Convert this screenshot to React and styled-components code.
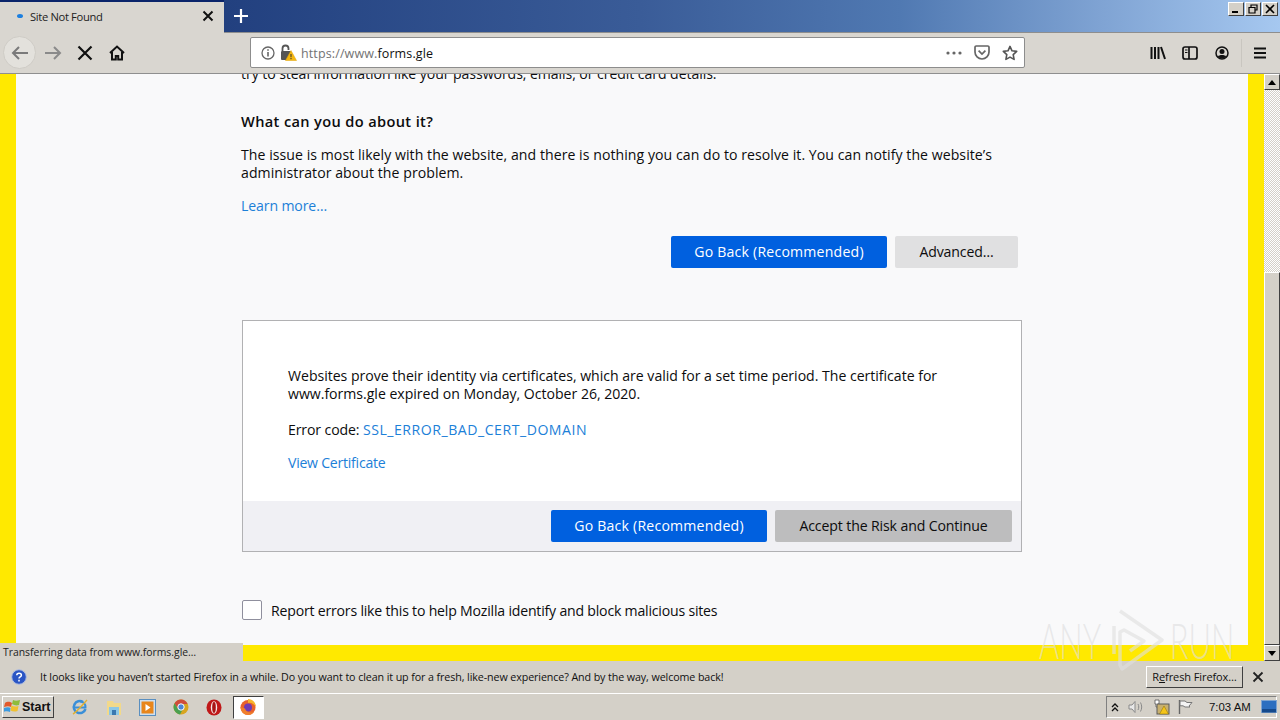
import React from "react";
import styled, { createGlobalStyle } from "styled-components";

const Global = createGlobalStyle`
  html, body { margin: 0; padding: 0; height: 100%; overflow: hidden; }
  #root { height: 720px; }
  * { box-sizing: border-box; }
`;

const uiFont = `"Open Sans", "Noto Sans", sans-serif`;
const pageFont = `"Open Sans", "Noto Sans", sans-serif`;

const Screen = styled.div`
  position: relative; width: 1280px; height: 720px; display: flex; flex-direction: column;
  background: #d4d0c8; overflow: hidden; font-family: ${uiFont}; color: #0c0c0d;
`;

/* title bar + tab */
const TitleBar = styled.div`
  height: 33px; flex: none; display: flex; align-items: stretch;
  background: linear-gradient(90deg, #102a70 0, #22407f 225px, #3a5c98 640px, #5079b2 900px, #7fa3d3 1100px, #a6c8f0 1280px);
  border-bottom: 1px solid #8e8e8e;
`;
const Tab = styled.div`
  width: 224px; height: 33px; flex: none; display: flex; align-items: center; padding: 0 10px 3px 17px;
  background: #d9d6d0; border-top: 2px solid #0a246a; font-size: 11.2px; letter-spacing: -0.34px;
`;
const TabDot = styled.span`
  width: 6px; height: 4px; border-radius: 50%; background: #1c7fe0; margin-right: 7px; flex: none;
`;
const TabTitle = styled.span` flex: 1; color: #222; `;
const NewTab = styled.div` width: 33px; display: flex; align-items: center; justify-content: center; `;
const Spacer = styled.div` flex: 1; `;
const WinButtons = styled.div` display: flex; gap: 1px; padding: 2px 2px 0 0; align-items: flex-start; `;
const WinButton = styled.div`
  width: 16px; height: 14px; background: #d4d0c8; display: flex; align-items: center; justify-content: center;
  border: 1px solid; border-color: #fff #404040 #404040 #fff;
`;

/* toolbar */
const Toolbar = styled.div`
  height: 41px; flex: none; display: flex; align-items: center; background: #d9d6d0;
  border-bottom: 1px solid #8f8f8f; padding: 0 0 1px 3px;
`;
const BackCircle = styled.div`
  width: 33px; height: 33px; border-radius: 50%; background: #e3e1dc; border: 1px solid #cfccc6;
  display: flex; align-items: center; justify-content: center; flex: none;
`;
const NavSlot = styled.div`
  width: ${p => p.$w}px; flex: none; display: flex; align-items: center; justify-content: center;
`;
const UrlBar = styled.div`
  width: 775px; height: 31px; margin-left: ${p => p.$ml}px; flex: none; display: flex; align-items: center; background: #fff;
  border: 1px solid #8d8d8d; border-radius: 2px; padding: 0 0 0 10px; font-size: 12.5px; letter-spacing: 0.12px;
`;
const UrlGrey = styled.span` color: #737373; margin-left: 4px; padding-top: 1px; `;
const UrlDark = styled.span` color: #111; `;
const UrlGap = styled.div` flex: 1; `;
const UrlIcon = styled.div` width: 28px; display: flex; justify-content: center; align-items: center; flex: none; `;
const LockWrap = styled.div` margin-left: 5px; display: flex; flex: none; `;
const RightTools = styled.div` display: flex; align-items: center; margin-left: 117px; `;
const ToolSlot = styled.div` width: 32px; display: flex; justify-content: center; align-items: center; `;
const ToolDivider = styled.div` width: 1px; height: 28px; background: #c9c6c0; margin: 0 2px 0 3px; `;

/* content */
const ContentRow = styled.div` flex: 1; min-height: 0; display: flex; `;
const Page = styled.div`
  flex: 1; min-width: 0; overflow: hidden; background: #f9f9fa;
  border: solid #ffe900; border-width: 0 16px 16px 16px;
`;
const Sheet = styled.div`
  margin-top: -9px; padding-left: 225px; font-family: ${pageFont}; font-size: 14.1px; line-height: 18px; letter-spacing: -0.12px;
`;
const CutLine = styled.div` height: 18px; white-space: nowrap; letter-spacing: -0.07px; `;
const Heading = styled.h2`
  margin: 27px 0 0; font-size: 14.6px; line-height: 22px; font-weight: 600; letter-spacing: 0.36px;
`;
const Para = styled.p` margin: ${p => p.$mt ?? 14}px 0 0; white-space: nowrap; letter-spacing: ${p => p.$ls ?? 0.05}px; `;
const TextLink = styled.a` color: #1c80d8; text-decoration: none; letter-spacing: ${p => p.$ls ?? -0.12}px; `;
const LinkLine = styled.div` margin-top: ${p => p.$mt}px; height: 18px; `;
const ButtonRow = styled.div`
  margin-top: 21px; width: 777px; display: flex; justify-content: flex-end; gap: 8px;
`;
const Btn = styled.button`
  width: ${p => p.$w}px; height: 32px; border: 0; border-radius: 2px; padding: 0 0 2px;
  font-family: ${pageFont}; font-size: 14.1px; letter-spacing: ${p => p.$ls ?? -0.12}px;
  background: ${p => p.$bg}; color: ${p => p.$fg};
`;
const CertBox = styled.div`
  margin: 52px 0 0 1px; width: 780px; height: 232px; background: #fff; border: 1px solid #b1b1b3;
  display: flex; flex-direction: column;
`;
const CertBody = styled.div` flex: 1; padding: 46px 0 0 45px; `;
const CertFooter = styled.div`
  height: 50px; flex: none; background: #f0f0f4; display: flex; justify-content: flex-end; align-items: center;
  gap: 8px; padding: 0 9px 0 0;
`;
const ReportRow = styled.div` margin: 48px 0 0 1px; display: flex; align-items: center; gap: 9px; `;
const Check = styled.div` width: 20px; height: 20px; background: #fff; border: 1px solid #8f8f9d; border-radius: 2px; flex: none; `;
const ReportText = styled.span` padding-top: 1px; letter-spacing: -0.2px; `;

/* scrollbar */
const ScrollBar = styled.div` width: 16px; flex: none; display: flex; flex-direction: column; `;
const ScrollBtn = styled.div`
  width: 16px; height: 16px; flex: none; background: #d4d0c8; display: flex; align-items: center; justify-content: center;
  border: 1px solid; border-color: #fff #404040 #404040 #fff;
`;
const ScrollTrack = styled.div`
  height: ${p => p.$h}px; flex: none;
  background: repeating-conic-gradient(#d4d0c8 0 25%, #fff 0 50%) 0 0 / 2px 2px;
`;
const ScrollThumb = styled.div`
  flex: 1; background: #d4d0c8; border: 1px solid; border-color: #fff #404040 #404040 #fff;
`;

/* overlays */
const StatusPanel = styled.div`
  position: absolute; left: 0; top: 643px; width: 243px; height: 18px; background: #d4d0c8;
  font-size: 10.4px; line-height: 19px; padding-left: 3px; color: #222;
`;
const Watermark = styled.div`
  position: absolute; left: 1040px; top: 608px; width: 192px; height: 64px; display: flex; align-items: center;
  color: rgba(222,222,222,.62); font-family: "Lato", sans-serif; font-weight: 300; font-size: 50px; line-height: 42px; pointer-events: none;
`;
const WmText = styled.span`
  width: 60px; height: 42px; flex: none; display: flex; justify-content: center; white-space: nowrap; transform: scaleX(.62);
  margin-left: ${p => p.$auto ? "auto" : "0"};
`;
const WmLogo = styled.svg` margin-left: 10px; flex: none; `;

/* notification */
const NotifyBar = styled.div`
  height: 32px; flex: none; display: flex; align-items: center; background: #d4d0c8; padding: 0 16px 0 11px;
  font-size: 10.7px; color: #111; letter-spacing: -0.094px;
`;
const NotifyText = styled.span` flex: 1; margin-left: 13px; white-space: nowrap; `;
const RefreshBtn = styled.div`
  width: 97px; height: 22px; background: #d4d0c8; display: flex; align-items: center; justify-content: center;
  border: 1px solid; border-color: #fff #404040 #404040 #fff; margin-right: 9px; padding-bottom: 2px; font-size: 11px; color: #111;
`;
const Under = styled.span` text-decoration: underline; `;

/* taskbar */
const Taskbar = styled.div`
  height: 27px; flex: none; display: flex; align-items: center; background: #d4d0c8; border-top: 1px solid #fff; padding: 0 3px 0 2px;
`;
const StartBtn = styled.div`
  width: 52px; height: 22px; display: flex; align-items: center; padding-left: 1px; flex: none; margin-right: 9.25px;
  font: bold 12.5px "Liberation Sans", sans-serif; color: #111; background: #d4d0c8;
  border: 1px solid; border-color: #fff #404040 #404040 #fff;
`;
const Launch = styled.div`
  width: 33.5px; height: 24px; flex: none; display: flex; align-items: center; justify-content: center;
`;
const ActiveTask = styled.div`
  width: 31px; height: 23px; flex: none; margin-left: 2px; display: flex; align-items: center; justify-content: center;
  background: #fff; border: 1px solid; border-color: #404040 #fff #fff #404040;
`;
const Tray = styled.div`
  margin-left: auto; width: 171px; height: 22px; display: flex; align-items: center; padding: 0 0 0 3px;
  border: 1px solid; border-color: #808080 #fff #fff #808080; font: 11.4px "Liberation Sans", sans-serif; color: #111;
`;
const TrayIcon = styled.div` width: ${p => p.$w}px; flex: none; display: flex; justify-content: center; `;
const Clock = styled.span` width: 51px; margin-left: 9px; flex: none; white-space: nowrap; `;

const Svg = ({ w = 16, h = 16, children, vb }) => (
  <svg width={w} height={h} viewBox={vb || `0 0 ${w} ${h}`} fill="none">{children}</svg>
);

export default function App() {
  return (
    <Screen>
      <Global />
      <TitleBar>
        <Tab>
          <TabDot />
          <TabTitle>Site Not Found</TabTitle>
          <Svg w={12} h={12}><path d="M1.5 1.5l9 9M10.5 1.5l-9 9" stroke="#111" strokeWidth="2" /></Svg>
        </Tab>
        <NewTab>
          <Svg w={14} h={14}><path d="M7 0v14M0 7h14" stroke="#fff" strokeWidth="2.2" /></Svg>
        </NewTab>
        <Spacer />
        <WinButtons>
          <WinButton><Svg w={10} h={10}><path d="M1 8h6" stroke="#000" strokeWidth="2" /></Svg></WinButton>
          <WinButton><Svg w={10} h={10}><path d="M3 3V1h6v5H7M1 3.5h6V9H1z" stroke="#000" strokeWidth="1.2" /></Svg></WinButton>
          <WinButton><Svg w={10} h={10}><path d="M1 1l8 8M9 1L1 9" stroke="#000" strokeWidth="1.6" /></Svg></WinButton>
        </WinButtons>
      </TitleBar>

      <Toolbar>
        <BackCircle>
          <Svg w={18} h={16}><path d="M17 8H2M8 2L2 8l6 6" stroke="#7a7a7a" strokeWidth="2" /></Svg>
        </BackCircle>
        <NavSlot $w={33}>
          <Svg w={18} h={16}><path d="M1 8h15M10 2l6 6-6 6" stroke="#8a8a8a" strokeWidth="2" /></Svg>
        </NavSlot>
        <NavSlot $w={31}>
          <Svg w={16} h={16}><path d="M1.500 1.500l13 13M14.500 1.500l-13 13" stroke="#111" strokeWidth="2.2" /></Svg>
        </NavSlot>
        <NavSlot $w={34}>
          <Svg w={16} h={16}>
            <path d="M1 8l7-6.500L15 8M3 7v7.500h3.800V11h2.400v3.500H13V7" stroke="#111" strokeWidth="2" fill="none" />
          </Svg>
        </NavSlot>
        <UrlBar $ml={116}>
          <Svg w={14} h={14}><circle cx="7" cy="7" r="6" stroke="#666" strokeWidth="1.3" /><path d="M7 6v4.400M7 3.200v1.600" stroke="#666" strokeWidth="1.6" /></Svg>
          <LockWrap>
            <Svg w={17} h={17}>
              <path d="M2.500 7V4.500a3 3 0 016 0V6" stroke="#555" strokeWidth="1.800" />
              <rect x="1" y="7" width="10" height="9" rx="1" fill="#555" />
              <path d="M11 6.500l5.500 10h-11z" fill="#f5b70f" stroke="#e0a208" strokeWidth=".5" />
              <path d="M11 10v3.200M11 14v1.200" stroke="#333" strokeWidth="1" />
            </Svg>
          </LockWrap>
          <UrlGrey>https://www.<UrlDark>forms.gle</UrlDark></UrlGrey>
          <UrlGap />
          <UrlIcon>
            <Svg w={16} h={4}><circle cx="2" cy="2" r="1.600" fill="#666" /><circle cx="8" cy="2" r="1.600" fill="#666" /><circle cx="14" cy="2" r="1.600" fill="#666" /></Svg>
          </UrlIcon>
          <UrlIcon>
            <Svg w={16} h={15}><path d="M1 2.200A1.200 1.200 0 012.200 1h11.600A1.200 1.200 0 0115 2.200V7a7 7 0 01-14 0z" stroke="#666" strokeWidth="1.7" /><path d="M4.600 5.600L8 9l3.400-3.400" stroke="#666" strokeWidth="1.7" /></Svg>
          </UrlIcon>
          <UrlIcon>
            <Svg w={16} h={16}><path d="M8 1.400l2 4.400 4.700.6-3.500 3.200.9 4.800L8 12.100l-4.100 2.300.9-4.800L1.300 6.400 6 5.800z" stroke="#555" strokeWidth="1.6" strokeLinejoin="round" /></Svg>
          </UrlIcon>
        </UrlBar>
        <RightTools>
          <ToolSlot>
            <Svg w={16} h={14}><path d="M1.500 1v12M5 1v12M8.500 1v12M11 1l4 12" stroke="#111" strokeWidth="2" /></Svg>
          </ToolSlot>
          <ToolSlot>
            <Svg w={16} h={14}><rect x="1" y="1" width="14" height="12" rx="2" stroke="#111" strokeWidth="1.7" /><path d="M7 1v12" stroke="#111" strokeWidth="1.7" /><path d="M3 4h2.500M3 6.500h2.500" stroke="#111" strokeWidth="1.2" /></Svg>
          </ToolSlot>
          <ToolSlot>
            <Svg w={14} h={14}><circle cx="7" cy="7" r="6" stroke="#111" strokeWidth="1.5" /><circle cx="7" cy="5.600" r="2.500" fill="#111" /><path d="M2.800 10.600C4 8.600 10 8.600 11.200 10.600L9 12.600H5z" fill="#111" /></Svg>
          </ToolSlot>
          <ToolDivider />
          <ToolSlot>
            <Svg w={14} h={12}><path d="M1 1.500h12M1 6h12M1 10.500h12" stroke="#111" strokeWidth="2" /></Svg>
          </ToolSlot>
        </RightTools>
      </Toolbar>

      <ContentRow>
        <Page>
          <Sheet>
            <CutLine>try to steal information like your passwords, emails, or credit card details.</CutLine>
            <Heading>What can you do about it?</Heading>
            <Para>
              The issue is most likely with the website, and there is nothing you can do to resolve it. You can notify the website’s<br />
              administrator about the problem.
            </Para>
            <LinkLine $mt={15}><TextLink>Learn more…</TextLink></LinkLine>
            <ButtonRow>
              <Btn $w={216} $bg="#0060df" $fg="#fff" $ls={0.21}>Go Back (Recommended)</Btn>
              <Btn $w={123} $bg="#e0e0e1" $fg="#0c0c0d">Advanced…</Btn>
            </ButtonRow>
            <CertBox>
              <CertBody>
                <Para $mt={0} $ls={-0.02}>
                  Websites prove their identity via certificates, which are valid for a set time period. The certificate for<br />
                  www.forms.gle expired on Monday, October 26, 2020.
                </Para>
                <LinkLine $mt={18}>Error code: <TextLink $ls={0.52}>SSL_ERROR_BAD_CERT_DOMAIN</TextLink></LinkLine>
                <LinkLine $mt={15}><TextLink $ls={-0.25}>View Certificate</TextLink></LinkLine>
              </CertBody>
              <CertFooter>
                <Btn $w={216} $bg="#0060df" $fg="#fff" $ls={0.21}>Go Back (Recommended)</Btn>
                <Btn $w={237} $bg="#bdbdbe" $fg="#0c0c0d">Accept the Risk and Continue</Btn>
              </CertFooter>
            </CertBox>
            <ReportRow>
              <Check />
              <ReportText>Report errors like this to help Mozilla identify and block malicious sites</ReportText>
            </ReportRow>
          </Sheet>
        </Page>
        <ScrollBar>
          <ScrollBtn><Svg w={8} h={5}><path d="M4 0l4 5H0z" fill="#000" /></Svg></ScrollBtn>
          <ScrollTrack $h={182} />
          <ScrollThumb />
          <ScrollBtn><Svg w={8} h={5}><path d="M4 5l4-5H0z" fill="#000" /></Svg></ScrollBtn>
        </ScrollBar>
      </ContentRow>

      <NotifyBar>
        <Svg w={16} h={16}>
          <circle cx="8" cy="8" r="7.300" fill="#2a55c4" stroke="#aebde0" strokeWidth="1" />
          <path d="M5.800 6.200C5.800 3.600 10.400 3.600 10.400 6.200 10.400 8 8 7.800 8 9.600M8 10.800v1.600" stroke="#fff" strokeWidth="1.5" />
        </Svg>
        <NotifyText>It looks like you haven’t started Firefox in a while. Do you want to clean it up for a fresh, like-new experience? And by the way, welcome back!</NotifyText>
        <RefreshBtn><span>R<Under>e</Under>fresh Firefox…</span></RefreshBtn>
        <Svg w={12} h={12}><path d="M1.500 1.500l9 9M10.500 1.500l-9 9" stroke="#222" strokeWidth="1.8" /></Svg>
      </NotifyBar>

      <Taskbar>
        <StartBtn>
          <Svg w={18} h={16}>
            <path d="M1 4c3-2 5-1 7 0L7 8C5 7 3 7 0 8z" fill="#e2592b" />
            <path d="M9 1c2 1 4 1 7 0l-1 5c-3 1-5 0-7-1z" fill="#8ebc3c" />
            <path d="M0 9c3-1 5-1 6.500 0L6 13c-2-1-4-1-7 0z" fill="#3a9ae0" />
            <path d="M7.500 6.500c2 1 4 1.500 7 .5l-1 5c-3 1-5 .5-7-.5z" fill="#f0c030" />
          </Svg>
          Start
        </StartBtn>
        <Launch>
          <Svg w={18} h={18}>
            <path d="M14.500 11A6 6 0 1112 4" stroke="#3a8fd8" strokeWidth="2.500" />
            <path d="M3.500 9.500h11A5.500 5.500 0 009 3.500" stroke="#3a8fd8" strokeWidth="2" />
            <path d="M2 16C6 14 13 5 16 2" stroke="#e0b030" strokeWidth="1.500" />
          </Svg>
        </Launch>
        <Launch>
          <Svg w={18} h={18}>
            <path d="M2 3h6l1 2h7v12H2z" fill="#f2d98a" />
            <path d="M4 9h10v8H4z" fill="#8cc7e6" />
            <path d="M7 12h4v5H7z" fill="#3a78b0" />
          </Svg>
        </Launch>
        <Launch>
          <Svg w={17} h={17}>
            <rect x=".5" y=".5" width="16" height="16" fill="#cfe0f0" stroke="#5a8fc0" />
            <rect x="2.500" y="2.500" width="12" height="12" fill="#e8861c" />
            <path d="M6.500 5l5 3.500-5 3.500z" fill="#fff" />
          </Svg>
        </Launch>
        <Launch>
          <Svg w={16} h={16}>
            <circle cx="8" cy="8" r="7.500" fill="#d8a520" />
            <path d="M8 .5A7.500 7.500 0 001.500 4.300L5 10 8 5h6.500A7.500 7.500 0 008 .5z" fill="#cf4c3c" />
            <path d="M1.500 4.300A7.500 7.500 0 007 15.400L10 10H5z" fill="#4aa050" />
            <circle cx="8" cy="8" r="3.200" fill="#4c86d6" stroke="#fff" strokeWidth="1" />
          </Svg>
        </Launch>
        <Launch>
          <Svg w={16} h={17}>
            <ellipse cx="8" cy="8.500" rx="7.500" ry="8" fill="#c01818" />
            <ellipse cx="8" cy="8.500" rx="3.200" ry="6.200" fill="#f5e8e8" />
            <ellipse cx="8" cy="8.500" rx="1.800" ry="5.400" fill="#a81414" />
          </Svg>
        </Launch>
        <ActiveTask>
          <Svg w={18} h={18}>
            <circle cx="9" cy="9.500" r="7.500" fill="#e8622c" />
            <circle cx="9" cy="9.500" r="4" fill="#6e3bb5" />
            <path d="M9 1c5 0 8 4 8 8-2-3-5-5-8-4z" fill="#f7b52c" />
            <path d="M1.500 9c0 5 4 8 7.500 8 3 0 5-1.500 6-3.500-3 2-8 1-9-3z" fill="#f0802c" />
          </Svg>
        </ActiveTask>
        <Tray>
          <TrayIcon $w={10}><Svg w={8} h={9}><path d="M1 4l3-3 3 3M1 8l3-3 3 3" stroke="#111" strokeWidth="1.3" /></Svg></TrayIcon>
          <TrayIcon $w={32}>
            <Svg w={16} h={14}><path d="M1 5h3l3-3.500v11L4 9H1z" stroke="#8a8a8a" fill="#e8e8e8" /><path d="M10 4c1 2 1 4 0 6M12.500 2.500c1.600 3 1.600 6 0 9" stroke="#8a8a8a" /></Svg>
          </TrayIcon>
          <TrayIcon $w={18}>
            <Svg w={17} h={16}>
              <path d="M2 1h4v4H5v3H3V5H2z" fill="#fff" stroke="#555" strokeWidth=".8" />
              <rect x="4" y="5" width="12" height="10" fill="#c8b070" stroke="#5a5a5a" />
              <path d="M11 7l4.500 8h-9z" fill="#f5c518" stroke="#8a6d00" strokeWidth=".5" />
            </Svg>
          </TrayIcon>
          <TrayIcon $w={30}>
            <Svg w={16} h={16}><path d="M2.500 1v14" stroke="#666" strokeWidth="1.4" /><path d="M3 2h5l2 1.500h5l-3 3.500 1 1H8L6 6.800H3z" fill="#f4f4f4" stroke="#777" /></Svg>
          </TrayIcon>
          <Clock>7:03 AM</Clock>
          <TrayIcon $w={17}>
            <Svg w={16} h={14}><rect x=".5" y=".5" width="15" height="12" fill="#2c6fc0" stroke="#7ea4d0" /><path d="M1 9h14v3.500H1z" fill="#164a8c" /></Svg>
          </TrayIcon>
        </Tray>
      </Taskbar>

      <StatusPanel>Transferring data from www.forms.gle…</StatusPanel>
      <Watermark>
        <WmText>ANY</WmText>
        <WmLogo width="56" height="64" viewBox="0 0 56 64" fill="none">
          <path d="M4 18v28M10 3l42 29-40 29 -2-4V24l4-2 20 11-14 10" stroke="rgba(222,222,222,.62)" strokeWidth="3.500" strokeLinejoin="round" />
        </WmLogo>
        <WmText $auto>RUN</WmText>
      </Watermark>
    </Screen>
  );
}
